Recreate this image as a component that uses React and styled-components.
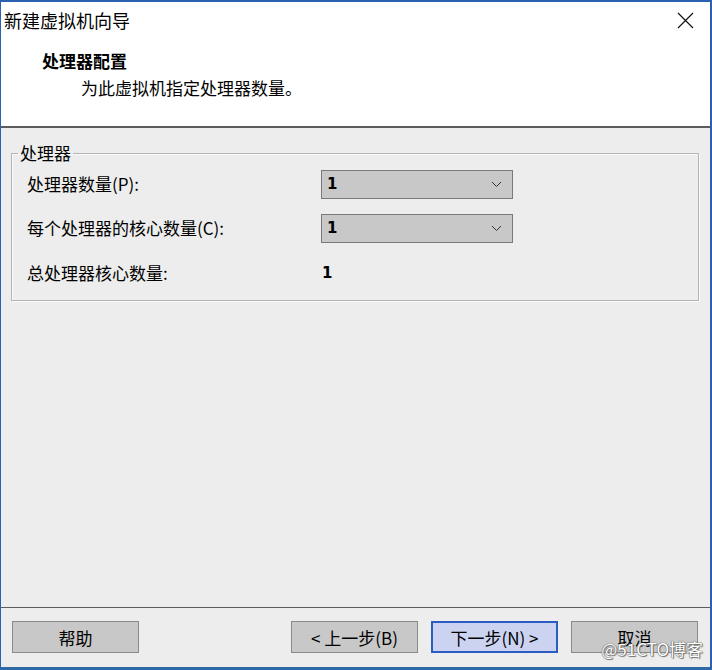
import React from "react";
import styled, { createGlobalStyle } from "styled-components";

const GlobalStyle = createGlobalStyle`
  html, body {
    margin: 0;
    padding: 0;
    background: #ffffff;
  }
  * {
    box-sizing: border-box;
  }
`;

const sans = `"Noto Sans CJK SC", "Noto Sans", sans-serif`;

const Window = styled.div`
  position: relative;
  width: 712px;
  height: 670px;
  display: flex;
  flex-direction: column;
  border-top: 2px solid #2b62b0;
  border-left: 1px solid #2b62b0;
  border-right: 2px solid #2b62b0;
  border-bottom: 3px solid #2f6aa6;
  background: #ededed;
  font-family: ${sans};
  color: #000;
  overflow: hidden;
`;

const Header = styled.header`
  height: 126px;
  background: #ffffff;
  border-bottom: 2px solid #5c5c5c;
  display: flex;
  flex-direction: column;
`;

const TitleBar = styled.div`
  display: flex;
  align-items: center;
  justify-content: space-between;
  height: 36px;
  padding: 0 15px 0 3px;
`;

const Title = styled.h1`
  margin: 0;
  font-size: 18px;
  font-weight: 400;
  line-height: 24px;
`;

const CloseButton = styled.button`
  width: 20px;
  height: 20px;
  padding: 0;
  border: 0;
  background: transparent;
  display: flex;
  align-items: center;
  justify-content: center;
`;

const Heading = styled.div`
  margin: 12px 0 0 41px;
  font-size: 17px;
  font-weight: 700;
  line-height: 22px;
`;

const SubHeading = styled.div`
  margin: 5px 0 0 80px;
  font-size: 17px;
  line-height: 22px;
`;

const Body = styled.main`
  flex: 1;
  padding: 16px 11px 0 10px;
`;

const GroupBox = styled.fieldset`
  margin: 0;
  padding: 0 15px 4px 15px;
  border: 1px solid #b4b4b4;
  box-shadow: inset 1px 1px 0 #fafafa, 1px 1px 0 #fafafa;
`;

const Legend = styled.legend`
  margin-left: -9px;
  padding: 0 2px;
  font-size: 17px;
  line-height: 18px;
`;

const Row = styled.div`
  display: grid;
  grid-template-columns: 294px 192px;
  align-items: center;
  height: ${(p) => (p.$tall ? "46px" : "44px")};
  font-size: 17px;
`;

const Label = styled.span`
  line-height: 20px;
`;

const Combo = styled.div`
  height: 29px;
  display: flex;
  align-items: center;
  justify-content: space-between;
  padding: 0 10px 0 5px;
  background: #c8c8c8;
  border: 1px solid #7a7a7a;
  font-family: "DejaVu Sans", sans-serif;
  font-size: 15px;
  font-weight: 700;
`;

const Value = styled.span`
  padding-left: 1px;
  font-family: "DejaVu Sans", sans-serif;
  font-size: 15px;
  font-weight: 700;
`;

const Footer = styled.footer`
  height: 60px;
  border-top: 1px solid #5c5c5c;
  padding: 13px 12px 0 11px;
  display: flex;
  gap: 13px;
`;

const Spacer = styled.div`
  flex: 1;
`;

const Button = styled.button`
  width: 127px;
  height: 32px;
  padding: 0;
  background: ${(p) => (p.$primary ? "#cbd3f1" : "#c8c8c8")};
  border: ${(p) => (p.$primary ? "2px solid #2a5cc4" : "1px solid #8a8a8a")};
  font-family: ${sans};
  font-size: 17px;
  color: #000;
`;

const Watermark = styled.div`
  position: absolute;
  right: 7px;
  bottom: 6px;
  font-family: ${sans};
  font-size: 17px;
  color: #ffffff;
  text-shadow: 0 0 1px #555, 0 0 1px #555, 1px 1px 1px #777;
  pointer-events: none;
`;

function Chevron() {
  return (
    <svg width="11" height="7" viewBox="0 0 11 7">
      <path d="M1 1 L5.5 5.5 L10 1" fill="none" stroke="#333" strokeWidth="1" />
    </svg>
  );
}

export default function App() {
  return (
    <Window>
      <GlobalStyle />
      <Header>
        <TitleBar>
          <Title>新建虚拟机向导</Title>
          <CloseButton aria-label="关闭">
            <svg width="17" height="17" viewBox="0 0 17 17">
              <path d="M1 1 L16 16 M16 1 L1 16" stroke="#111" strokeWidth="1.2" />
            </svg>
          </CloseButton>
        </TitleBar>
        <Heading>处理器配置</Heading>
        <SubHeading>为此虚拟机指定处理器数量。</SubHeading>
      </Header>

      <Body>
        <GroupBox>
          <Legend>处理器</Legend>
          <Row>
            <Label>处理器数量(P):</Label>
            <Combo>
              1
              <Chevron />
            </Combo>
          </Row>
          <Row>
            <Label>每个处理器的核心数量(C):</Label>
            <Combo>
              1
              <Chevron />
            </Combo>
          </Row>
          <Row $tall>
            <Label>总处理器核心数量:</Label>
            <Value>1</Value>
          </Row>
        </GroupBox>
      </Body>

      <Footer>
        <Button>帮助</Button>
        <Spacer />
        <Button>&lt; 上一步(B)</Button>
        <Button $primary>下一步(N) &gt;</Button>
        <Button>取消</Button>
      </Footer>
      <Watermark>@51CTO博客</Watermark>
    </Window>
  );
}
